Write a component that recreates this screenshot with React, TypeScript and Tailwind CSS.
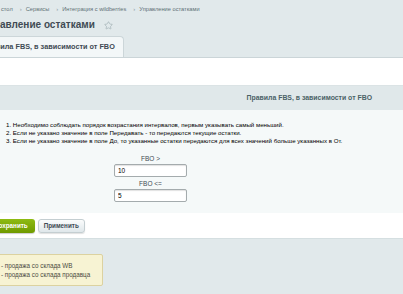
import { Star } from 'lucide-react';

const crumbs = ['Рабочий стол', 'Сервисы', 'Интеграция с wildberries', 'Управление остатками'];

const rules = [
  '1. Необходимо соблюдать порядок возрастания интервалов, первым указывать самый меньший.',
  '2. Если не указано значение в поле Передавать - то передаются текущие остатки.',
  '3. Если не указано значение в поле До, то указанные остатки передаются для всех значений больше указанных в От.',
];

function Field({ label, value }: { label: string; value: string }) {
  return (
    <div className="flex flex-col items-center w-[73px]">
      <label className="text-[6.5px] leading-[8px] text-[#3f4b54] h-[8px]">{label}</label>
      <input
        readOnly
        value={value}
        className="mt-[1px] w-[73px] h-[13px] px-[3px] bg-white border border-[#a4abad] rounded-[2px] shadow-[inset_0_1px_1px_rgba(0,0,0,0.12)] text-[6.5px] text-[#000] outline-none"
      />
    </div>
  );
}

export default function App() {
  return (
    <div className="w-[403px] h-[294px] overflow-hidden bg-[#e1e9eb] font-['Liberation_Sans',Arial,sans-serif]">
      {/* Breadcrumbs */}
      <div className="h-[14px] pt-[4px] flex items-center ml-[-23px] text-[5.7px] leading-[7px] text-[#5e7076] whitespace-nowrap">
        {crumbs.map((c, i) => (
          <span key={c} className="flex items-center">
            {i > 0 && <span className="ml-[7px] mr-[4px] text-[6px] text-[#8a9a9f]">›</span>}
            <span>{c}</span>
          </span>
        ))}
      </div>

      {/* Title */}
      <div className="h-[22px] flex items-center ml-[-18px] whitespace-nowrap">
        <h1 className="text-[10px] font-bold text-[#3f4b54] leading-[12px]">Управление остатками</h1>
        <Star className="ml-[9px] w-[9px] h-[9px] text-[#a6b4b8]" strokeWidth={2} />
      </div>

      {/* Tabs */}
      <div className="h-[21px] flex items-end">
        <div className="h-[21px] ml-[-33px] pl-[14px] pr-[8px] flex items-center bg-[#f3f7f8] border border-b-0 border-[#ccd6d9] rounded-tr-[4px] text-[7.3px] font-bold text-[#3f4b54] whitespace-nowrap">
          Правила FBS, в зависимости от FBO
        </div>
      </div>

      {/* Panel */}
      <div className="border-t border-[#cbd5d8] bg-white">
        <div className="h-[28px] border-b border-[#dbe3e5]" />

        <div className="h-[24px] bg-[#e0e8ea] flex items-center justify-end pr-[31px]">
          <span className="text-[6.9px] font-bold text-[#4b6267] whitespace-nowrap">Правила FBS, в зависимости от FBO</span>
        </div>

        <div className="h-[103px] bg-[#f5f9f9] pt-[11px]">
          <div className="pl-[6px] text-[6.15px] leading-[8px] text-[#000] whitespace-nowrap">
            {rules.map(r => (
              <div key={r}>{r}</div>
            ))}
          </div>
          <div className="mt-[10px] pl-[114px] flex flex-col gap-[3px]">
            <Field label="FBO >" value="10" />
            <Field label="FBO <=" value="5" />
          </div>
        </div>

        {/* Buttons */}
        <div className="h-[26px] bg-white flex items-center gap-[3px] border-b border-[#d5dfe1]">
          <button className="ml-[-16px] h-[14px] pl-[10px] pr-[7px] rounded-[3px] bg-gradient-to-b from-[#8ebb12] to-[#6f9a00] text-white text-[6.3px] font-bold shadow-[0_1px_1px_rgba(0,0,0,0.2)]">
            Сохранить
          </button>
          <button className="h-[14px] px-[5px] rounded-[3px] bg-gradient-to-b from-[#fbfcfc] to-[#dfe7ea] border border-[#c4ced1] text-[#3f4b54] text-[6.3px] font-bold shadow-[0_1px_1px_rgba(0,0,0,0.12)]">
            Применить
          </button>
        </div>
      </div>

      {/* Note */}
      <div className="mt-[15px] ml-[-10px] w-[113px] h-[32px] bg-[#f7f3d3] border border-[#dcd2a0] rounded-[2px] flex flex-col justify-center pl-[10px] text-[6.3px] leading-[9px] text-[#4b4b3f] whitespace-nowrap">
        <div>- продажа со склада WB</div>
        <div>- продажа со склада продавца</div>
      </div>
    </div>
  );
}
